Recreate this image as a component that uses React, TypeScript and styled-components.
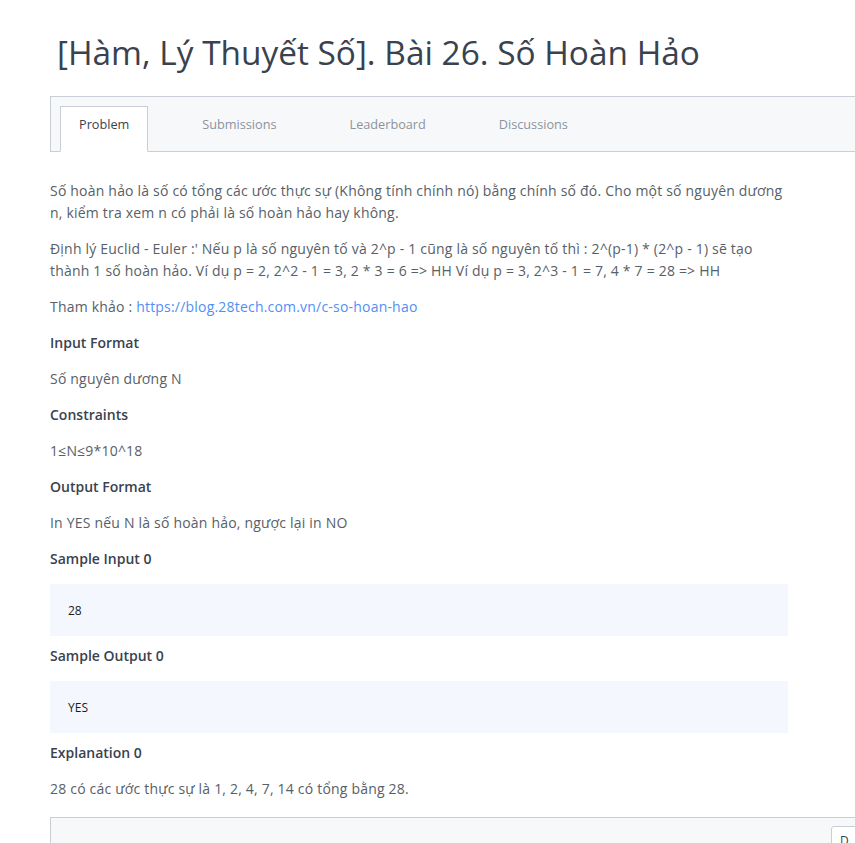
import React from "react";
import styled, { createGlobalStyle } from "styled-components";

const Global = createGlobalStyle`
  html, body { margin: 0; padding: 0; background: #fff; overflow: hidden; }
  body { font-family: "Open Sans", "Noto Sans", sans-serif; }
`;

const Page = styled.div`
  width: 855px;
  height: 843px;
  overflow: hidden;
  padding-top: 28px;
  box-sizing: border-box;
`;

const Title = styled.h1`
  margin: 0 0 20px 57px;
  font-family: "Open Sans", sans-serif;
  font-weight: 400;
  font-size: 33.4px;
  line-height: 48px;
  color: #39424e;
  white-space: nowrap;
`;

const TabBar = styled.div`
  margin-left: 50px;
  height: 54px;
  border: 1px solid #c9ced6;
  border-right: none;
  background: #f7f8fa;
  display: flex;
  align-items: flex-end;
  gap: 35px;
  padding-left: 9px;
`;

const Tab = styled.div<{ $active?: boolean }>`
  height: 46px;
  margin-bottom: -1px;
  padding: 8px 18px 0;
  box-sizing: border-box;
  font-size: 12.7px;
  line-height: 18px;
  color: ${(p) => (p.$active ? "#39424e" : "#8a949e")};
  background: ${(p) => (p.$active ? "#fff" : "transparent")};
  border: 1px solid ${(p) => (p.$active ? "#c9ced6" : "transparent")};
  border-bottom: 1px solid ${(p) => (p.$active ? "#fff" : "transparent")};
`;

const Content = styled.div`
  width: 738px;
  margin-left: 50px;
  padding-top: 28px;
`;

const Para = styled.p`
  margin: 0 0 14px;
  font-size: 14px;
  line-height: 22px;
  letter-spacing: 0.2px;
  color: #576068;
`;

const Heading = styled.h3`
  margin: 0 0 14px;
  font-size: 14px;
  font-weight: 600;
  line-height: 22px;
  color: #39424e;
`;

const Link = styled.a`
  color: #4f8ff7;
  text-decoration: none;
`;

const Sample = styled.pre`
  margin: 0 0 9px;
  height: 52px;
  box-sizing: border-box;
  padding: 0 18px;
  display: flex;
  align-items: center;
  background: #f4f8fe;
  font-family: "Open Sans", sans-serif;
  font-size: 12px;
  color: #1a1d21;
`;

const EditorBox = styled.div`
  margin-left: 50px;
  margin-top: 17px;
  height: 40px;
  border: 1px solid #c9ced6;
  border-right: none;
  background: #f7f8fa;
  display: flex;
  justify-content: flex-end;
  padding-top: 8px;
`;

const LangButton = styled.div`
  width: 40px;
  height: 30px;
  margin-right: -16px;
  background: #fff;
  border: 1px solid #c9ced6;
  border-radius: 3px;
  font-size: 12px;
  line-height: 16px;
  color: #39424e;
  padding: 6px 0 0 8px;
  box-sizing: border-box;
`;

export default function App() {
  return (
    <Page>
      <Global />
      <Title>[Hàm, Lý Thuyết Số]. Bài 26. Số Hoàn Hảo</Title>
      <TabBar>
        <Tab $active>Problem</Tab>
        <Tab>Submissions</Tab>
        <Tab>Leaderboard</Tab>
        <Tab>Discussions</Tab>
      </TabBar>
      <Content>
        <Para>
          Số hoàn hảo là số có tổng các ước thực sự (Không tính chính nó) bằng chính số đó. Cho một số nguyên dương
          n, kiểm tra xem n có phải là số hoàn hảo hay không.
        </Para>
        <Para>
          Định lý Euclid - Euler :' Nếu p là số nguyên tố và 2^p - 1 cũng là số nguyên tố thì : 2^(p-1) * (2^p - 1) sẽ tạo
          thành 1 số hoàn hảo. Ví dụ p = 2, 2^2 - 1 = 3, 2 * 3 = 6 =&gt; HH Ví dụ p = 3, 2^3 - 1 = 7, 4 * 7 = 28 =&gt; HH
        </Para>
        <Para>
          Tham khảo : <Link href="#">https://blog.28tech.com.vn/c-so-hoan-hao</Link>
        </Para>
        <Heading>Input Format</Heading>
        <Para>Số nguyên dương N</Para>
        <Heading>Constraints</Heading>
        <Para>1≤N≤9*10^18</Para>
        <Heading>Output Format</Heading>
        <Para>In YES nếu N là số hoàn hảo, ngược lại in NO</Para>
        <Heading>Sample Input 0</Heading>
        <Sample>28</Sample>
        <Heading>Sample Output 0</Heading>
        <Sample>YES</Sample>
        <Heading>Explanation 0</Heading>
        <Para>28 có các ước thực sự là 1, 2, 4, 7, 14 có tổng bằng 28.</Para>
      </Content>
      <EditorBox>
        <LangButton>D</LangButton>
      </EditorBox>
    </Page>
  );
}
